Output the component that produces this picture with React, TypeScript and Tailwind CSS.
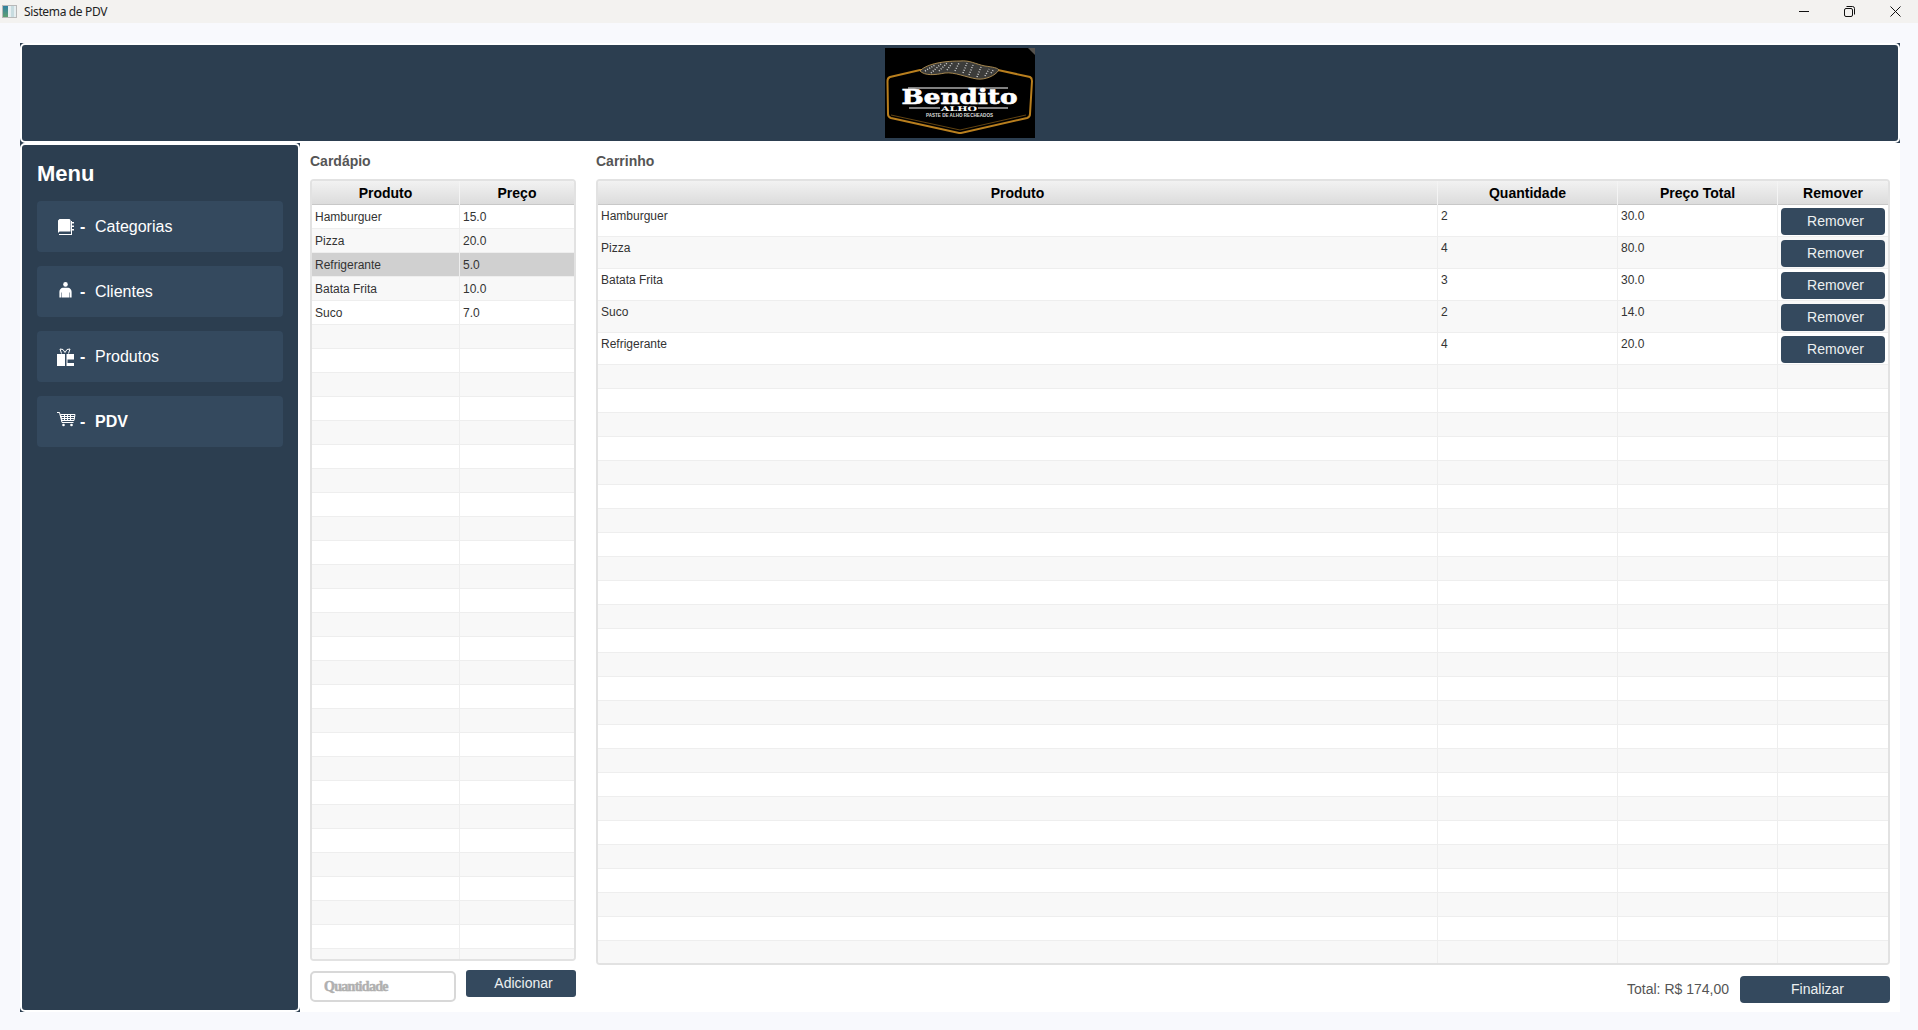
const menuItems = [
  { label: 'Categorias', icon: 'book' },
  { label: 'Clientes', icon: 'person' },
  { label: 'Produtos', icon: 'gift' },
  { label: 'PDV', icon: 'cart', active: true },
]

const cardapio = [
  { nome: 'Hamburguer', preco: '15.0' },
  { nome: 'Pizza', preco: '20.0' },
  { nome: 'Refrigerante', preco: '5.0' },
  { nome: 'Batata Frita', preco: '10.0' },
  { nome: 'Suco', preco: '7.0' },
]

const carrinho = [
  { nome: 'Hamburguer', qtd: '2', total: '30.0' },
  { nome: 'Pizza', qtd: '4', total: '80.0' },
  { nome: 'Batata Frita', qtd: '3', total: '30.0' },
  { nome: 'Suco', qtd: '2', total: '14.0' },
  { nome: 'Refrigerante', qtd: '4', total: '20.0' },
]

function MenuIcon({ name }: { name: string }) {
  if (name === 'book') {
    return (
      <svg width="16" height="16" viewBox="0 0 16 16" fill="#fff">
        <path d="M0 1.500 1.500 0H11.500L12.500 1V12.500H1.500L0 14Z" />
        <path d="M1 15H13V2H14V16H1Z" />
        <path d="M14 3h2v1.500h-2zM14 6.500h2V8h-2zM14 10h2v1.500h-2z" />
      </svg>
    )
  }
  if (name === 'person') {
    return (
      <svg width="13" height="16" viewBox="0 0 13 16" fill="#fff" className="ml-[1px] -mt-[3px]">
        <circle cx="6.500" cy="2.400" r="2.300" />
        <path d="M3.500 5.700h6c1.800.4 3 2 3.100 4V15.500H10.500V10.500H10V15.500H3V10.500H2.500V15.500H.4V9.700c.1-2 1.300-3.600 3.100-4Z" />
      </svg>
    )
  }
  if (name === 'gift') {
    return (
      <svg width="18" height="18" viewBox="0 0 18 18" fill="#fff" className="-ml-[1px]">
        <path d="M0 6h8v12H0zM9.500 6H17v12H9.500z" />
        <path d="M10.500 11.500H17V15H10.500Z" fill="#34495e" />
        <path d="M4.500 5.500 3 1l3 .5L8 4.500 10 1.500 13 1l-1.500 4.500" fill="none" stroke="#fff" strokeWidth="1" />
      </svg>
    )
  }
  return (
    <svg width="19" height="15" viewBox="0 0 19 15" fill="none" stroke="#fff" className="-ml-[1px] -mt-[5px]">
      <path d="M0 .500h2.500L5 10.500H16.500" strokeWidth="1" />
      <path d="M3.500 2.500h14.500l-1 6H5ZM3.800 4.500H18M4.300 6.500H17.500M7.500 2.500v6M10.500 2.500v6M13.500 2.500v6" strokeWidth="1" />
      <circle cx="6.500" cy="13" r="1.300" fill="#fff" stroke="none" />
      <circle cx="14.500" cy="13" r="1.300" fill="#fff" stroke="none" />
    </svg>
  )
}

function Logo() {
  return (
    <svg width="150" height="90" viewBox="0 0 150 90" className="block">
      <rect width="150" height="90" fill="#000" />
      <path d="M143 0h7v7Z" fill="#55524e" />
      <path d="M5 29 35 22H113L145 29Q147 30 147 33L145 66Q145 69 142 70L76 85Q75 85 74 85L6 70Q3 69 3 66L2.500 33Q2.500 30 5 29Z" fill="none" stroke="#b97f1e" strokeWidth="2" />
      <path d="M6 67 75 82 141 67" fill="none" stroke="#8a5f18" strokeWidth="0.700" />
      <path d="M35 23C40 17 55 13 75 13 85 12 90 16 100 18 108 19 113 20 114 22 110 28 100 32 92 31 80 29 70 24 60 25 50 27 40 28 35 23Z" fill="#3c3c3a" stroke="#c9a25a" strokeWidth="0.800" />
      <path d="M40 23 50 17M46 25 56 16M54 23 62 15M62 22 68 14M70 23 74 15M78 25 82 15M84 27 88 17M92 29 96 19M100 28 104 21M106 25 109 21" stroke="#cfcfcf" strokeWidth="1.500" strokeDasharray="1 1.500" />
      <rect x="23" y="39.500" width="100" height="1" fill="#fff" />
      <text x="74.500" y="56" textAnchor="middle" fontFamily="'DejaVu Serif', 'Liberation Serif', serif" fontWeight="700" fontSize="19.500" fill="#fff" stroke="#fff" strokeWidth="0.600" textLength="116" lengthAdjust="spacingAndGlyphs">Bendito</text>
      <rect x="24" y="59.500" width="31" height="1" fill="#fff" />
      <rect x="93" y="59.500" width="30" height="1" fill="#fff" />
      <text x="74" y="62.500" textAnchor="middle" fontFamily="'DejaVu Serif', serif" fontWeight="700" fontSize="6.500" fill="#fff" textLength="36" lengthAdjust="spacingAndGlyphs">ALHO</text>
      <text x="74.500" y="69" textAnchor="middle" fontFamily="'Liberation Sans', sans-serif" fontWeight="700" fontSize="4.500" fill="#ddd" textLength="67" lengthAdjust="spacingAndGlyphs">PASTE DE ALHO RECHEADOS</text>
    </svg>
  )
}

export default function App() {
  return (
    <div className="h-[1030px] w-[1918px] overflow-hidden bg-[#f8f9fd] font-['Liberation_Sans',Arial,sans-serif]">
      {/* barra de titulo */}
      <div className="flex h-[23px] items-center justify-between bg-[#f3f2f0]">
        <div className="flex items-center">
          <div className="ml-[2px] flex h-[13px] w-[15px] border border-[#b8b8b8] bg-[#e6eef0]">
            <div className="w-[5px] bg-gradient-to-b from-[#2f7f9f] to-[#5f9f70]" />
            <div className="ml-[3px] w-[3px] bg-[#c8dce0]" />
          </div>
          <span className="ml-[7px] font-['Noto_Sans',sans-serif] text-[12px] tracking-[-0.35px] text-[#222]">Sistema de PDV</span>
        </div>
        <div className="flex items-center gap-[35px] pr-[17px]">
          <svg width="10" height="11" viewBox="0 0 10 11" fill="none" stroke="#111">
            <path d="M0 5.500h10" />
          </svg>
          <svg width="11" height="11" viewBox="0 0 11 11" fill="none" stroke="#111">
            <rect x="0.500" y="2.500" width="8" height="8" rx="1.500" />
            <path d="M2.500.500h6a2 2 0 0 1 2 2v6" />
          </svg>
          <svg width="11" height="11" viewBox="0 0 11 11" fill="none" stroke="#111">
            <path d="M.5.500l10 10M10.500.500l-10 10" />
          </svg>
        </div>
      </div>

      <div className="ml-[20px] mt-[20px] w-[1880px]">
        {/* cabecalho */}
        <div className="h-[100px] bg-[#2c3e50]">
          <div className="flex h-full items-center justify-center rounded-[5px] border-2 border-white">
            <Logo />
          </div>
        </div>

        <div className="flex h-[869px] bg-white">
          {/* menu lateral */}
          <div className="w-[280px] shrink-0 bg-[#2c3e50]">
            <div className="h-full rounded-[5px] border-2 border-white px-[15px] pt-[16px]">
              <h2 className="mb-[14px] text-[22px] leading-[26px] font-bold text-white">Menu</h2>
              <div className="flex flex-col gap-[14px]">
                {menuItems.map((item) => (
                  <div key={item.label} className="flex h-[51px] w-[246px] items-center rounded-[4px] bg-[#34495e] pl-[21px] text-white">
                    <div className="flex w-[22px]">
                      <MenuIcon name={item.icon} />
                    </div>
                    <span className="w-[15px] text-[16px] font-bold">-</span>
                    <span className={`text-[16px] ${item.active ? 'font-bold' : ''}`}>{item.label}</span>
                  </div>
                ))}
              </div>
            </div>
          </div>

          {/* cardapio */}
          <div className="ml-[10px] flex w-[266px] shrink-0 flex-col">
            <h3 className="mt-[8px] h-[28px] text-[14px] leading-[20px] font-bold text-[#555]">Cardápio</h3>
            <div className="h-[782px] overflow-hidden rounded-[4px] border-2 border-[#e2e2e2]">
              <div className="grid h-[24px] grid-cols-[148px_1fr] border-b border-[#c8c8c8] bg-gradient-to-b from-[#f2f2f2] to-[#dcdcdc] text-center text-[14px] leading-[25px] font-bold text-black">
                <div className="border-r border-[#f4f4f4]">Produto</div>
                <div>Preço</div>
              </div>
              {Array.from({ length: 32 }).map((_, i) => {
                const row = cardapio[i]
                const bg = i === 2 ? 'bg-[#d0d0d0]' : i % 2 === 1 ? 'bg-[#f8f8f8]' : 'bg-white'
                return (
                  <div key={i} className={`grid h-[24px] grid-cols-[148px_1fr] border-b border-[#eeeeee] text-[12px] leading-[25px] text-[#333] ${bg}`}>
                    <div className="border-r border-[#eeeeee] pl-[3px]">{row?.nome}</div>
                    <div className="pl-[3px]">{row?.preco}</div>
                  </div>
                )
              })}
            </div>
            <div className="mt-[9px] flex items-start justify-between">
              <input
                placeholder="Quantidade"
                className="mt-[1px] h-[31px] w-[146px] rounded-[5px] border-2 border-[#d8d8d8] bg-white pl-[12px] font-['Liberation_Serif',serif] text-[14px] font-bold tracking-[-0.7px] placeholder:text-[#b0b0b0] placeholder:[-webkit-text-stroke:0.5px_#b0b0b0]"
              />
              <button className="h-[27px] w-[110px] rounded-[3px] bg-[#34495e] pl-[5px] text-[14px] text-[#ecf0f1]">Adicionar</button>
            </div>
          </div>

          {/* carrinho */}
          <div className="ml-[20px] flex w-[1294px] shrink-0 flex-col">
            <h3 className="mt-[8px] h-[28px] text-[14px] leading-[20px] font-bold text-[#555]">Carrinho</h3>
            <div className="h-[786px] overflow-hidden rounded-[4px] border-2 border-[#e2e2e2]">
              <div className="grid h-[24px] grid-cols-[840px_180px_160px_1fr] border-b border-[#c8c8c8] bg-gradient-to-b from-[#f2f2f2] to-[#dcdcdc] text-center text-[14px] leading-[25px] font-bold text-black">
                <div className="border-r border-[#f4f4f4]">Produto</div>
                <div className="border-r border-[#f4f4f4]">Quantidade</div>
                <div className="border-r border-[#f4f4f4]">Preço Total</div>
                <div>Remover</div>
              </div>
              {carrinho.map((row, i) => (
                <div key={row.nome} className={`grid h-[32px] grid-cols-[840px_180px_160px_1fr] border-b border-[#eeeeee] text-[12px] leading-[22px] text-[#333] ${i % 2 === 1 ? 'bg-[#f8f8f8]' : 'bg-white'}`}>
                  <div className="border-r border-[#eeeeee] pl-[3px]">{row.nome}</div>
                  <div className="border-r border-[#eeeeee] pl-[3px]">{row.qtd}</div>
                  <div className="border-r border-[#eeeeee] pl-[3px]">{row.total}</div>
                  <div className="pl-[3px] pt-[3px]">
                    <button className="block h-[27px] w-[104px] rounded-[4px] bg-[#34495e] pb-[1px] pl-[5px] text-[14px] text-[#ecf0f1]">Remover</button>
                  </div>
                </div>
              ))}
              {Array.from({ length: 25 }).map((_, i) => (
                <div key={i} className={`grid h-[24px] grid-cols-[840px_180px_160px_1fr] border-b border-[#eeeeee] ${i % 2 === 0 ? 'bg-[#f8f8f8]' : 'bg-white'}`}>
                  <div className="border-r border-[#eeeeee]" />
                  <div className="border-r border-[#eeeeee]" />
                  <div className="border-r border-[#eeeeee]" />
                  <div />
                </div>
              ))}
            </div>
            <div className="mt-[11px] flex items-center justify-end">
              <span className="mr-[11px] text-[14px] text-[#555]">Total: R$ 174,00</span>
              <button className="h-[27px] w-[150px] rounded-[4px] bg-[#34495e] pl-[5px] text-[14px] text-[#ecf0f1]">Finalizar</button>
            </div>
          </div>
        </div>
      </div>
    </div>
  )
}
